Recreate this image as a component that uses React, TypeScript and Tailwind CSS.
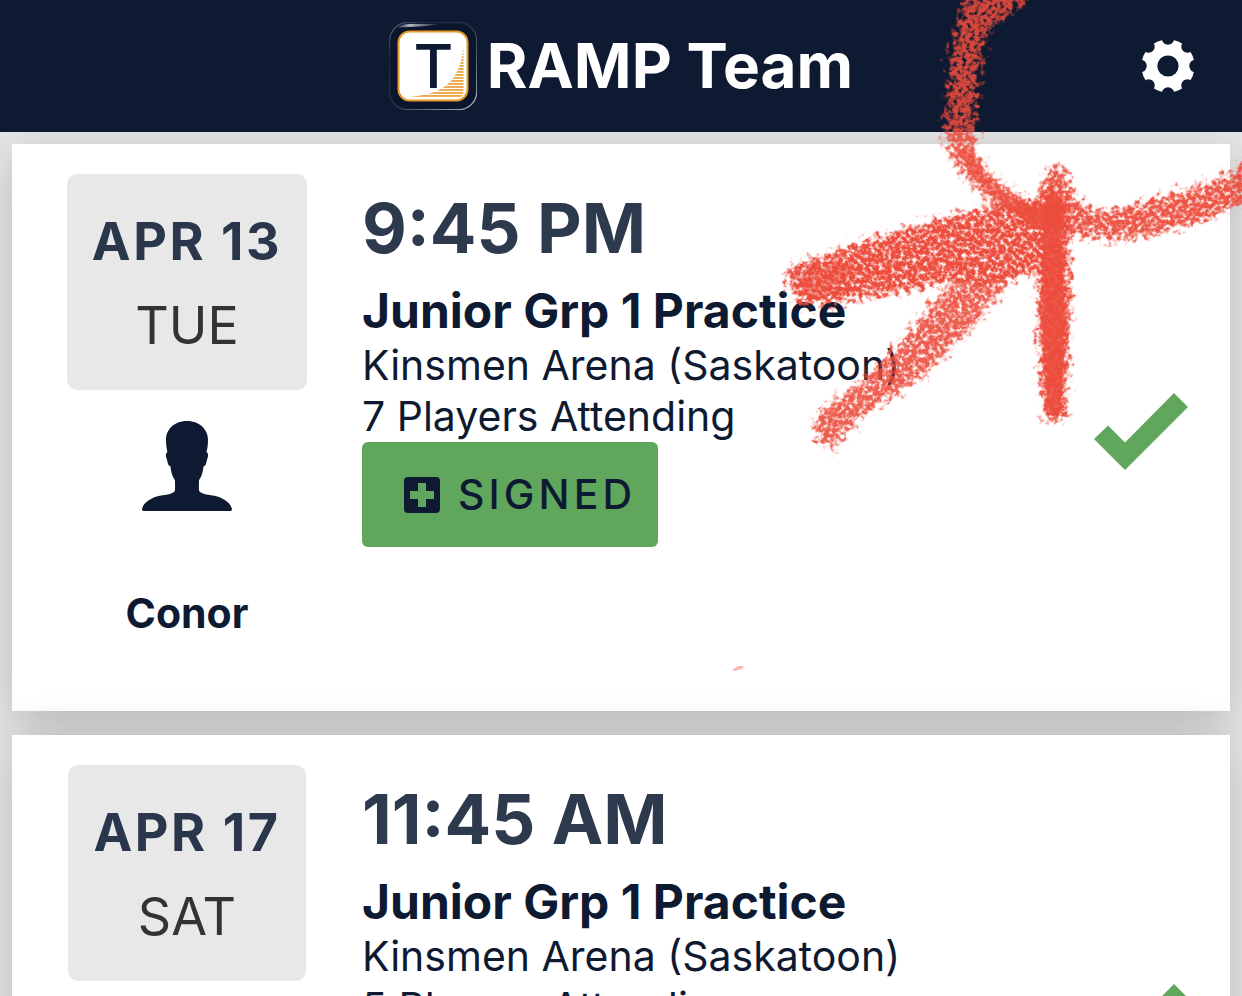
import { IoIosPerson } from "react-icons/io";

type Practice = {
  date: string;
  day: string;
  time: string;
  title: string;
  venue: string;
  attending: number;
  member: string;
};

const practices: Practice[] = [
  { date: "APR 13", day: "TUE", time: "9:45 PM", title: "Junior Grp 1 Practice", venue: "Kinsmen Arena (Saskatoon)", attending: 7, member: "Conor" },
  { date: "APR 17", day: "SAT", time: "11:45 AM", title: "Junior Grp 1 Practice", venue: "Kinsmen Arena (Saskatoon)", attending: 5, member: "Conor" },
];

function Logo() {
  const stripes = Array.from({ length: 18 }, (_, i) => 25 + i * 3);
  return (
    <svg viewBox="0 0 88 88" className="size-[88px]" aria-hidden="true">
      <defs>
        <linearGradient id="rim" x1="0" y1="0" x2="1" y2="1">
          <stop offset="0" stopColor="#5d687d" />
          <stop offset="0.2" stopColor="#1b2740" />
          <stop offset="0.5" stopColor="#2c374f" />
          <stop offset="1" stopColor="#b4bccb" />
        </linearGradient>
        <linearGradient id="shine" x1="0" y1="0" x2="1" y2="0">
          <stop offset="0" stopColor="#fff" stopOpacity="0.1" />
          <stop offset="0.3" stopColor="#fff" stopOpacity="0.7" />
          <stop offset="1" stopColor="#fff" stopOpacity="0" />
        </linearGradient>
        <clipPath id="swoosh">
          <path d="M74.500 24C73.500 38 70 49 62 59C53 69 40 73 20 75H70Q74.500 75 74.500 70Z" />
        </clipPath>
      </defs>
      <rect x="0.700" y="0.700" width="87" height="87" rx="18" fill="#0b152b" stroke="url(#rim)" strokeWidth="1.200" />
      <path d="M8 6Q13 2 20 2H52Q36 5 20 5Q13 5 8 6Z" fill="url(#shine)" />
      <rect x="9.500" y="9.500" width="69" height="69" rx="11" fill="#fff" stroke="#e59a2d" strokeWidth="2" />
      <g clipPath="url(#swoosh)" fill="#eba748">
        {stripes.map((y) => (
          <rect key={y} x="18" y={y} width="58" height="1.900" />
        ))}
      </g>
      <text x="44.500" y="66" textAnchor="middle" className="fill-[#0e1a31] font-['Inter'] text-[61px] font-medium">
        T
      </text>
    </svg>
  );
}

function Gear() {
  const bites = [0, 45, 90, 135, 180, 225, 270, 315];
  return (
    <svg viewBox="-27 -27 54 54" className="size-[54px]" aria-hidden="true">
      <mask id="gear">
        <circle r="26.600" fill="#fff" />
        <circle r="10.600" fill="#000" />
        {bites.map((a) => (
          <circle key={a} cx="27.500" cy="0" r="6.200" fill="#000" transform={`rotate(${a})`} />
        ))}
      </mask>
      <rect x="-27" y="-27" width="54" height="54" fill="#fff" mask="url(#gear)" />
    </svg>
  );
}

function Header() {
  return (
    <header className="grid h-[132px] shrink-0 grid-cols-[1fr_auto_1fr] items-center bg-[#0e1a31] text-white">
      <h1 className="col-start-2 flex items-center gap-2.5 text-[62px] leading-none font-bold">
        <Logo />
        RAMP Team
      </h1>
      <button type="button" aria-label="Settings" className="mr-[47px] justify-self-end">
        <Gear />
      </button>
    </header>
  );
}

function PracticeCard({ practice }: { practice: Practice }) {
  return (
    <article className="flex min-h-[567px] bg-white py-[30px] pr-[42px] shadow-[0_10px_48px_rgba(0,0,0,0.22)]">
      <div className="flex w-[350px] shrink-0 flex-col items-center">
        <div className="rounded-[10px] bg-[#e8e8e8] px-[25px] pt-[26px] pb-[22px] text-center text-[52px] leading-[84px]">
          <p className="font-bold tracking-wider text-[#2a364b]">{practice.date}</p>
          <p className="text-[#333333]">{practice.day}</p>
        </div>
        <IoIosPerson className="mt-4 size-[120px]" aria-hidden="true" />
        <p className="mt-[62px] text-[41px] leading-[51px] font-bold">{practice.member}</p>
      </div>
      <div className="min-w-0 grow">
        <p className="pt-3 pb-3 text-[69px] leading-[84px] font-bold text-[#2d394d]">{practice.time}</p>
        <h2 className="text-[48px] leading-[58px] font-bold">{practice.title}</h2>
        <p className="text-[41px] leading-[51px]">{practice.venue}</p>
        <p className="text-[41px] leading-[51px]">{practice.attending} Players Attending</p>
        <button type="button" className="flex h-[105px] items-center gap-[18px] rounded-md bg-[#60a65d] pr-[22px] pl-[42px] text-[41px] font-medium tracking-widest">
          <svg viewBox="0 0 36 36" className="size-9 fill-current" aria-hidden="true">
            <path fillRule="evenodd" d="M4 0H32Q36 0 36 4V32Q36 36 32 36H4Q0 36 0 32V4Q0 0 4 0ZM14 6V14H6V22H14V30H22V22H30V14H22V6Z" />
          </svg>
          SIGNED
        </button>
      </div>
      <svg viewBox="0 0 94 77" className="mt-2 h-[77px] w-[94px] shrink-0 self-center" role="img" aria-label="Attending">
        <path d="M0 46L14 32.500L31 49.500L80 0L94 14L31 77Z" fill="#60a65d" />
      </svg>
    </article>
  );
}

function MarkerStrokes() {
  return (
    <svg viewBox="720 0 522 680" className="pointer-events-none absolute top-0 right-0 h-[680px] w-[522px]" aria-hidden="true">
      <defs>
        <filter id="crayon" x="720" y="-20" width="560" height="700" filterUnits="userSpaceOnUse" colorInterpolationFilters="sRGB">
          <feTurbulence type="fractalNoise" baseFrequency="0.16" numOctaves="2" seed="4" result="noise" />
          <feTurbulence type="fractalNoise" baseFrequency="0.24" numOctaves="2" seed="12" result="fine" />
          <feGaussianBlur in="SourceGraphic" stdDeviation="2.2" result="soft" />
          <feDisplacementMap in="soft" in2="noise" scale="26" xChannelSelector="R" yChannelSelector="G" result="rough" />
          <feColorMatrix in="fine" type="matrix" values="0 0 0 0 0  0 0 0 0 0  0 0 0 0 0  0 0 3 0 -0.62" result="grain" />
          <feComposite in="rough" in2="grain" operator="in" />
          <feGaussianBlur stdDeviation="0.5" />
        </filter>
        <filter id="core" x="720" y="-20" width="560" height="700" filterUnits="userSpaceOnUse" colorInterpolationFilters="sRGB">
          <feTurbulence type="fractalNoise" baseFrequency="0.25" numOctaves="2" seed="9" result="noise" />
          <feGaussianBlur in="SourceGraphic" stdDeviation="1.5" result="soft" />
          <feDisplacementMap in="soft" in2="noise" scale="14" xChannelSelector="R" yChannelSelector="G" />
        </filter>
      </defs>
      <g filter="url(#crayon)" fill="#ec4d3d">
        <path d="M970 -5C954 20 950 60 946 130C946 160 962 176 990 202L1040 240L1052 206C1010 196 985 175 975 150C973 110 978 60 988 32C998 20 1015 10 1032 -5Z" opacity="0.900" />
        <path d="M788 268C850 245 920 222 1000 204L1056 196L1056 262C1010 284 985 284 970 280C900 290 850 304 800 305Q786 290 788 268Z" />
        <path d="M974 268L1018 272C978 318 930 380 884 400C860 416 845 432 832 450Q816 446 814 418C850 390 890 360 922 316Q940 294 974 268Z" opacity="0.900" />
        <path d="M1040 192L1050 166L1062 168L1076 198C1090 214 1110 212 1130 206C1170 196 1200 184 1232 174L1250 156V202C1200 222 1150 242 1100 239Q1070 236 1038 226Z" opacity="0.950" />
        <path d="M1038 196L1068 200V240C1071 300 1070 360 1064 421H1046C1038 360 1037 300 1038 236Z" />
      </g>
      <g filter="url(#core)" fill="#ec4d3d">
        <path d="M1042 200L1064 200V240C1068 300 1067 360 1061 415H1048C1040 360 1040 300 1042 236Z" opacity="0.900" />
        <path d="M958 148C965 172 990 198 1015 214L1040 222V205C1012 202 985 180 972 148Z" opacity="0.600" />
        <path d="M1005 205L1042 206L1050 180L1062 204L1066 232L1030 226Z" opacity="0.850" />
        <path d="M798 278Q820 266 850 264L846 284L810 298Z" opacity="0.500" />
      </g>
      <path d="M732 670L738 666L744 666L742 669L735 671Z" fill="#ec4d3d" opacity="0.400" />
    </svg>
  );
}

export default function App() {
  return (
    <div className="relative flex h-screen flex-col overflow-hidden bg-[#e8e8e8] font-['Inter',sans-serif] text-[#0e1a31]">
      <Header />
      <main className="flex grow flex-col gap-6 overflow-y-auto p-3 [scrollbar-width:none] *:shrink-0">
        {practices.map((p) => (
          <PracticeCard key={p.date} practice={p} />
        ))}
      </main>
      <MarkerStrokes />
    </div>
  );
}
